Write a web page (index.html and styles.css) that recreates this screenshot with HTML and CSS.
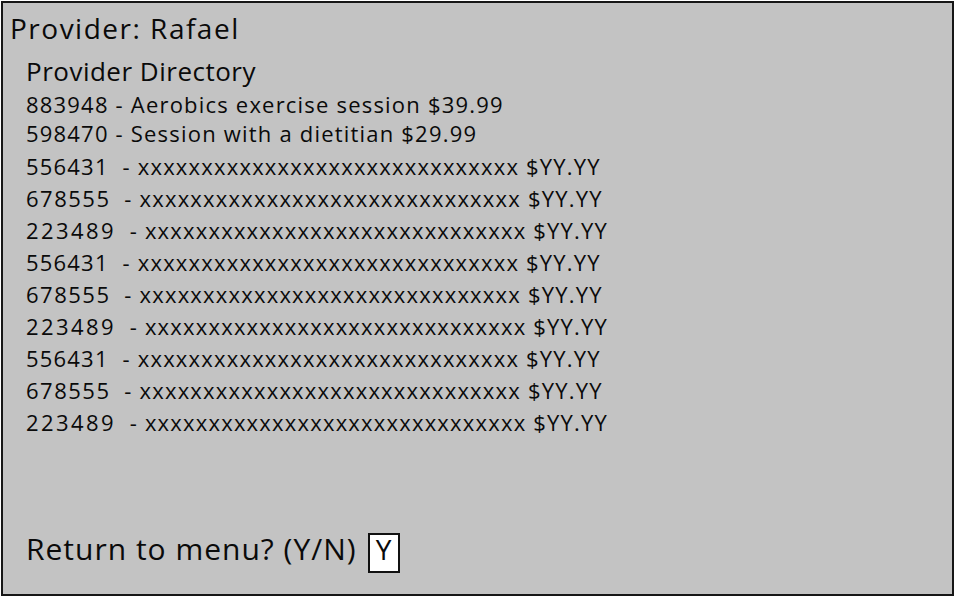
FILE: index.html
```html
<!DOCTYPE html>
<html lang="en">
<head>
<meta charset="utf-8">
<title>Provider Directory</title>
<link rel="stylesheet" href="styles.css">
</head>
<body>
<div class="screen">
  <div class="title">Provider: Rafael</div>
  <div class="content">
    <div class="heading">Provider Directory</div>
    <div class="rows rows-top">
      <div class="row">883948 - Aerobics exercise session $39.99</div>
      <div class="row">598470 - Session with a dietitian $29.99</div>
    </div>
    <div class="rows rows-main">
      <div class="row"><span class="code">556431</span>  - xxxxxxxxxxxxxxxxxxxxxxxxxxxxxx $YY.YY</div>
      <div class="row"><span class="code code-mid">678555</span>  - xxxxxxxxxxxxxxxxxxxxxxxxxxxxxx $YY.YY</div>
      <div class="row"><span class="code code-wide">223489</span>  - xxxxxxxxxxxxxxxxxxxxxxxxxxxxxx $YY.YY</div>
      <div class="row"><span class="code">556431</span>  - xxxxxxxxxxxxxxxxxxxxxxxxxxxxxx $YY.YY</div>
      <div class="row"><span class="code code-mid">678555</span>  - xxxxxxxxxxxxxxxxxxxxxxxxxxxxxx $YY.YY</div>
      <div class="row"><span class="code code-wide">223489</span>  - xxxxxxxxxxxxxxxxxxxxxxxxxxxxxx $YY.YY</div>
      <div class="row"><span class="code">556431</span>  - xxxxxxxxxxxxxxxxxxxxxxxxxxxxxx $YY.YY</div>
      <div class="row"><span class="code code-mid">678555</span>  - xxxxxxxxxxxxxxxxxxxxxxxxxxxxxx $YY.YY</div>
      <div class="row"><span class="code code-wide">223489</span>  - xxxxxxxxxxxxxxxxxxxxxxxxxxxxxx $YY.YY</div>
    </div>
    <div class="prompt">
      <span class="prompt-text">Return to menu? (Y/N)</span>
      <span class="answer">Y</span>
    </div>
  </div>
</div>
</body>
</html>
```
FILE: styles.css
```css
html, body {
  margin: 0;
  padding: 0;
  background: #ffffff;
}
body {
  font-family: "Open Sans", "Noto Sans", sans-serif;
  color: #0a0a0a;
}
.screen {
  margin: 1px;
  width: 953px;
  height: 595px;
  box-sizing: border-box;
  border: 2px solid #161616;
  background: #c3c3c3;
  padding: 8px 0 0 7px;
  display: flex;
  flex-direction: column;
}
.title {
  font-size: 28px;
  line-height: 34px;
  letter-spacing: 1.5px;
}
.content {
  padding-left: 16px;
  display: flex;
  flex-direction: column;
  flex: 1;
}
.heading {
  font-size: 26px;
  line-height: 34px;
  letter-spacing: 0.5px;
  margin-top: 9px;
}
.rows {
  display: flex;
  flex-direction: column;
}
.row {
  white-space: pre;
  font-size: 22px;
  letter-spacing: 1.2px;
}
.code-mid {
  letter-spacing: 1.5px;
}
.code-wide {
  letter-spacing: 2.4px;
}
.rows-top .row {
  line-height: 29px;
}
.rows-main .row {
  line-height: 32px;
}
.rows-top {
  margin-top: 2px;
}
.rows-main {
  margin-top: 2px;
}
.prompt {
  margin-top: auto;
  margin-bottom: 21px;
  display: flex;
  align-items: baseline;
  gap: 11px;
}
.prompt-text {
  font-size: 30px;
  line-height: 36px;
  letter-spacing: 1px;
}
.answer {
  width: 32px;
  height: 40px;
  box-sizing: border-box;
  border: 2px solid #111;
  background: #fff;
  font-size: 28px;
  line-height: 28px;
  text-align: center;
}
```
